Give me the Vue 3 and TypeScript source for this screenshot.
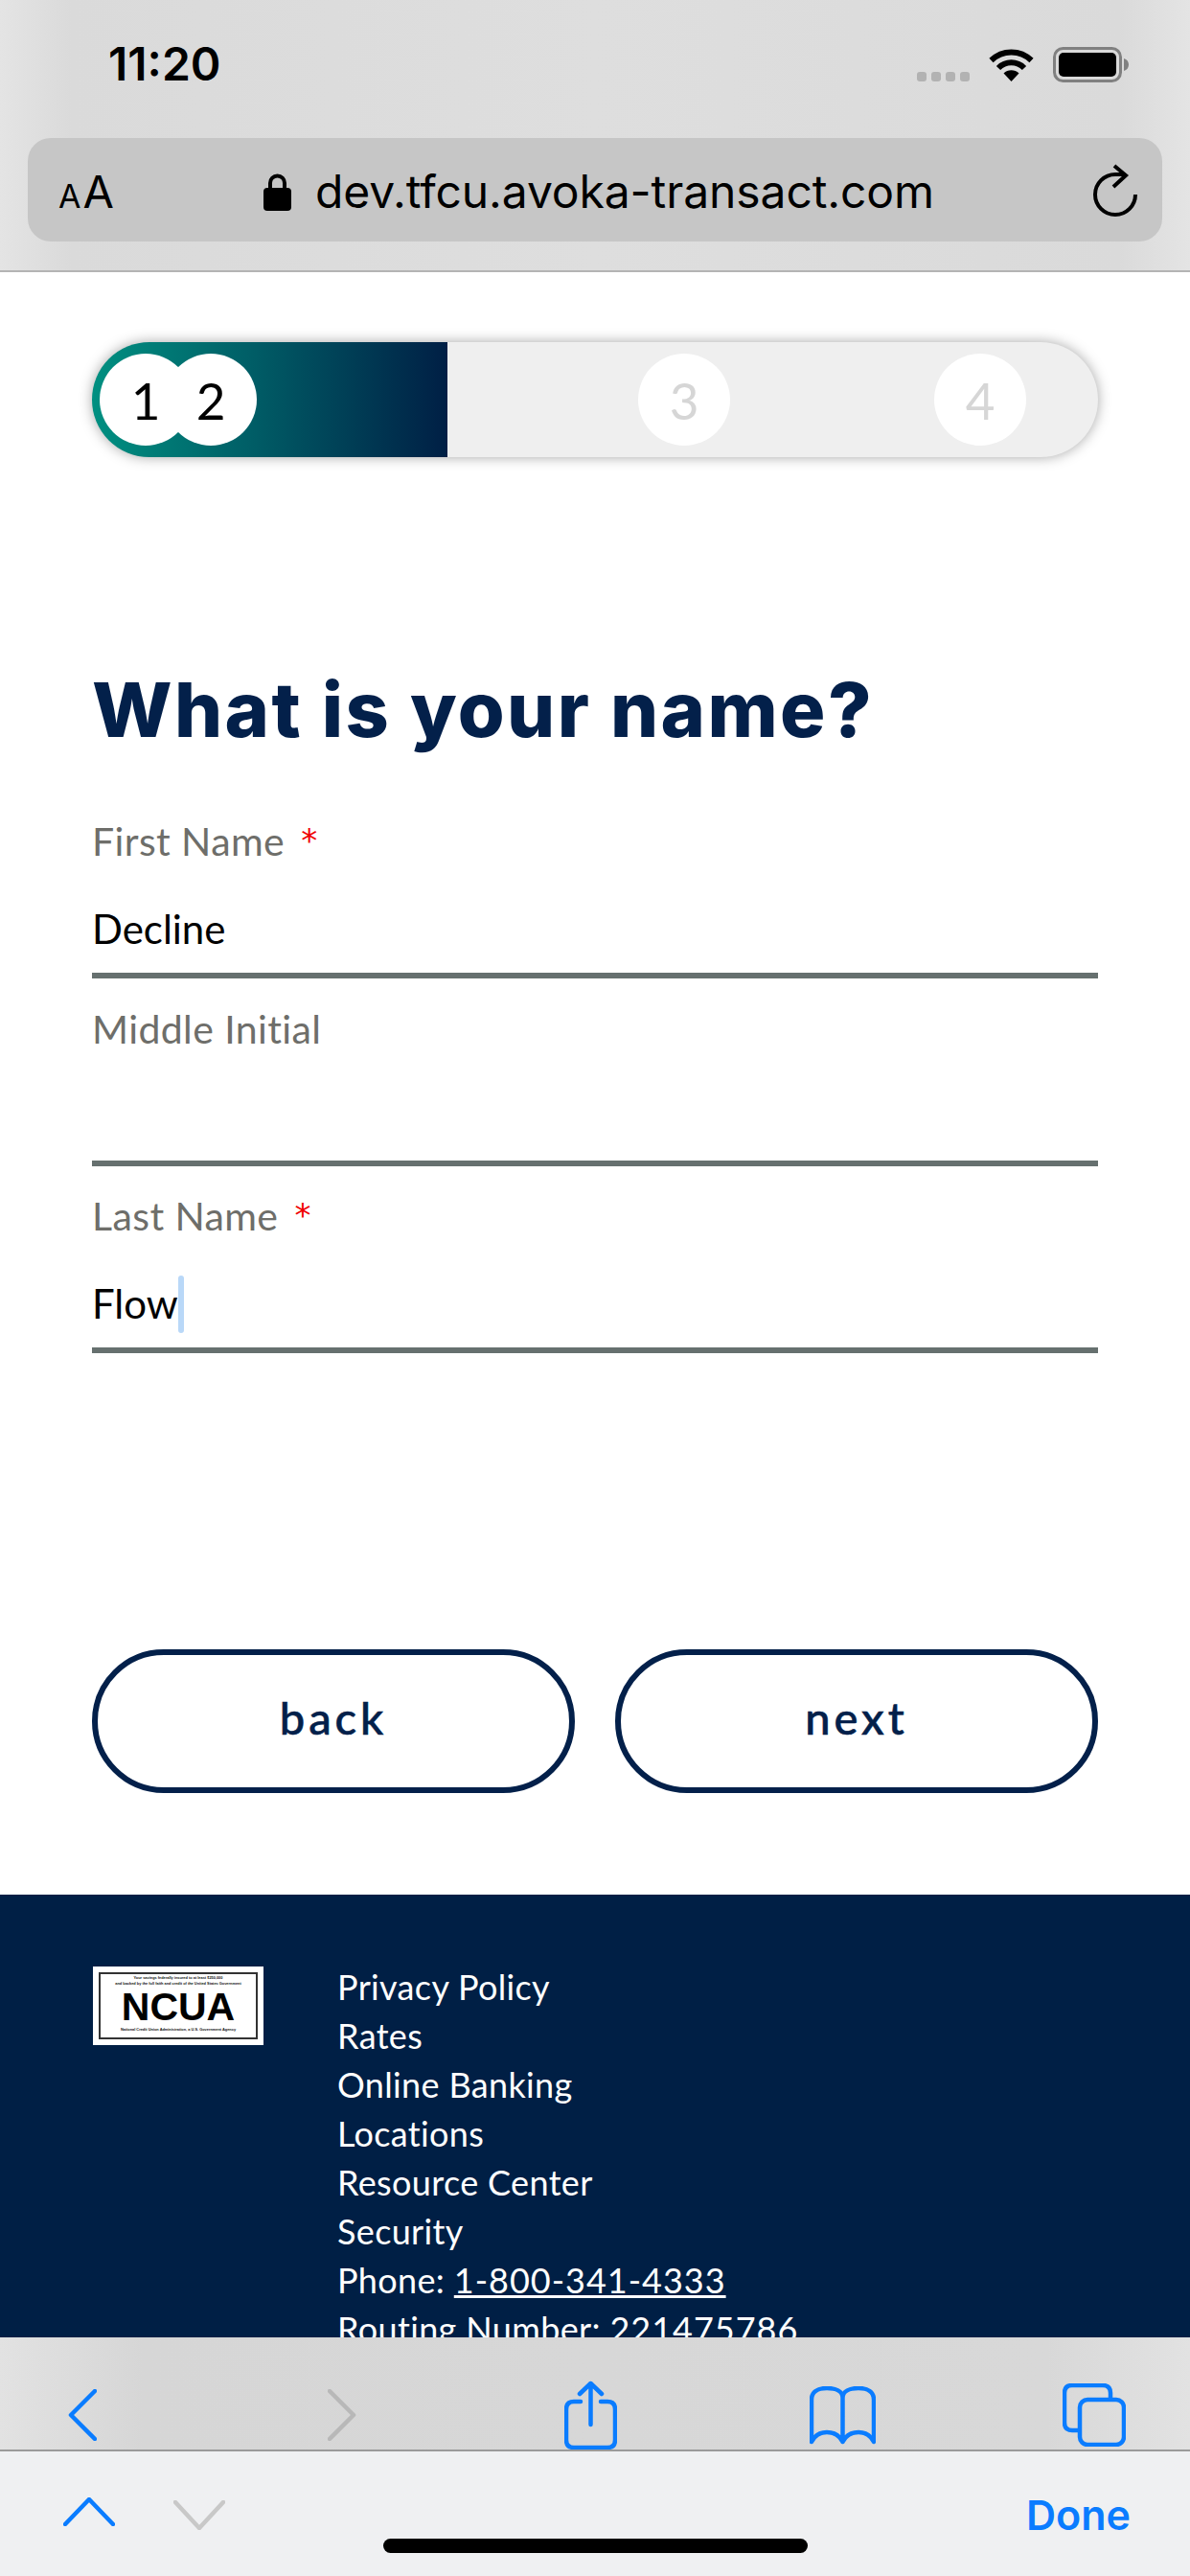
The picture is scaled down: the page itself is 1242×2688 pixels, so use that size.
<script setup lang="ts">
interface Field {
  label: string
  value?: string
  required?: boolean
  focused?: boolean
}

const fields: Field[] = [
  { label: 'First Name', value: 'Decline', required: true },
  { label: 'Middle Initial' },
  { label: 'Last Name', value: 'Flow', required: true, focused: true },
]

const steps = [
  { n: 1, cls: 'active' },
  { n: 2, cls: 'active second' },
  { n: 3, cls: 'todo third' },
  { n: 4, cls: 'todo fourth' },
]

const links = ['Privacy Policy', 'Rates', 'Online Banking', 'Locations', 'Resource Center', 'Security']
</script>

<template>
  <div class="phone">
    <header class="safari-top">
      <div class="status">
        <span class="time">11:20</span>
        <span class="dots"><i></i><i></i><i></i><i></i></span>
        <svg class="wifi" width="47" height="36" viewBox="0 0 47 36">
          <path d="M2.500 14A30 30 0 0 1 44.500 14" fill="none" stroke="#000" stroke-width="6" />
          <path d="M10 22A19 19 0 0 1 37 22" fill="none" stroke="#000" stroke-width="6" />
          <path d="M15.500 27.500A11.500 11.500 0 0 1 31.500 27.500L23.500 36Z" fill="#000" />
        </svg>
        <svg class="battery" width="79" height="37" viewBox="0 0 79 37">
          <rect x="1.500" y="1.500" width="69" height="34" rx="9" fill="none" stroke="#808080" stroke-width="3" />
          <rect x="6" y="6" width="60" height="25" rx="5" fill="#000" />
          <path d="M74 12c3 1 5 3 5 6.500s-2 5.500-5 6.500Z" fill="#808080" />
        </svg>
      </div>
      <div class="address">
        <span class="aa"><small>A</small>A</span>
        <svg class="lock" width="29" height="39" viewBox="0 0 29 39">
          <rect x="0" y="15" width="29" height="24" rx="4" fill="#000" />
          <path d="M7 17V10a7.500 7.500 0 0 1 15 0V17" fill="none" stroke="#000" stroke-width="4" />
        </svg>
        <span class="url">dev.tfcu.avoka-transact.com</span>
        <svg class="reload" width="48" height="56" viewBox="0 0 48 56">
          <path d="M45 32A21 21 0 1 1 24 11H34M23 2L35 12L22 24" fill="none" stroke="#000" stroke-width="4" />
        </svg>
      </div>
    </header>

    <main class="page">
      <section class="content">
        <div class="progress">
          <span v-for="s in steps" :key="s.n" class="step" :class="s.cls">{{ s.n }}</span>
        </div>

        <h1>What is your name?</h1>

        <div v-for="f in fields" :key="f.label" class="field">
          <label>{{ f.label }}<em v-if="f.required">*</em></label>
          <div class="value">{{ f.value }}<span v-if="f.focused" class="caret"></span></div>
        </div>

        <div class="actions">
          <button type="button">back</button>
          <button type="button">next</button>
        </div>
      </section>

      <footer class="footer">
        <div class="ncua">
          <div class="ncua-inner">
            <p>Your savings federally insured to at least $250,000</p>
            <p>and backed by the full faith and credit of the United States Government</p>
            <strong>NCUA</strong>
            <p>National Credit Union Administration, a U.S. Government Agency</p>
          </div>
        </div>
        <ul>
          <li v-for="l in links" :key="l">{{ l }}</li>
          <li>Phone: <u class="num">1-800-341-4333</u></li>
          <li>Routing Number: <span class="num">221475786</span></li>
        </ul>
      </footer>
    </main>

    <nav class="toolbar">
      <svg width="30" height="54" viewBox="0 0 30 54">
        <path d="M28 2L3 27L28 52" class="blue" />
      </svg>
      <svg width="30" height="54" viewBox="0 0 30 54">
        <path d="M2 2L27 27L2 52" class="grey" />
      </svg>
      <svg width="55" height="72" viewBox="0 0 55 72">
        <path d="M17 22H10q-8 0-8 8V62q0 8 8 8H45q8 0 8-8V30q0-8-8-8H38" class="blue" />
        <path d="M27.500 46V3M16 14L27.500 3L39 14" class="blue" />
      </svg>
      <svg width="69" height="61" viewBox="0 0 69 61">
        <path d="M34.500 12C34.500 5 27 2 18 2C8 2 2 6 2 14V58C6 50 12 48 18 48C25 48 31 51 34.500 58C38 51 44 48 51 48C57 48 63 50 67 58V14C67 6 61 2 51 2C42 2 34.500 5 34.500 12V58" class="blue" />
      </svg>
      <svg width="66" height="66" viewBox="0 0 66 66">
        <rect x="18" y="17" width="46" height="47" rx="8" class="blue" />
        <path d="M50 15V10q0-8-8-8H10q-8 0-8 8V41q0 8 8 8h6" class="blue" />
      </svg>
    </nav>

    <div class="findbar">
      <div class="find-row">
        <svg class="up" width="54" height="30" viewBox="0 0 54 30">
          <path d="M2 28L27 2L52 28" class="blue" />
        </svg>
        <svg class="down" width="54" height="31" viewBox="0 0 54 31">
          <path d="M2 2L27 29L52 2" class="lightgrey" />
        </svg>
        <span class="done-btn">Done</span>
      </div>
      <div class="home"></div>
    </div>
  </div>
</template>

<style scoped>
.phone,
.phone * {
  box-sizing: border-box;
}

.phone {
  width: 1242px;
  height: 2688px;
  display: flex;
  flex-direction: column;
  overflow: hidden;
  background: #fff;
  font-family: Lato, 'Noto Sans', sans-serif;
}

.safari-top {
  height: 284px;
  flex: none;
  border-bottom: 2px solid #b4b4b4;
  padding: 49px 29px 0;
  background: linear-gradient(90deg, #e4e4e4 0, #dadada 6%, #dedede 50%, #dadada 94%, #e4e4e4 100%);
}

.status {
  display: flex;
  align-items: flex-start;
  height: 95px;
  font-family: Inter, sans-serif;
}

.time {
  width: 928px;
  padding-left: 84px;
  font-size: 48px;
  line-height: 36px;
  font-weight: 600;
  color: #000;
}

.dots {
  display: flex;
  gap: 5px;
  width: 75px;
  padding-top: 26px;
}

.dots i {
  width: 10px;
  height: 10px;
  border-radius: 3px;
  background: #b2b2b2;
}

.battery {
  margin-left: 20px;
}

.address {
  height: 108px;
  border-radius: 24px;
  background: #c6c6c6;
  display: flex;
  align-items: center;
  font-family: Inter, sans-serif;
  color: #000;
}

.aa {
  width: 246px;
  padding-left: 32px;
  font-size: 47px;
  line-height: 48px;
  padding-top: 8px;
}

.aa small {
  font-size: 34px;
  margin-right: 2px;
}

.lock {
  margin-top: 4px;
}

.url {
  margin-left: 25px;
  width: 811px;
  font-size: 48px;
  letter-spacing: -0.1px;
  white-space: nowrap;
  padding-top: 2px;
}

.reload {
  margin-top: 2px;
}

.page {
  flex: 1;
  min-height: 0;
  overflow: hidden;
}

.content {
  height: 1693px;
  padding: 73px 96px 0;
}

.progress {
  height: 120px;
  border-radius: 60px;
  background: linear-gradient(90deg, #009081 0, #001f45 100%) no-repeat 0 0 / 371px 100%, #efefef;
  box-shadow: 0 0 14px rgba(0, 0, 0, 0.35);
  display: flex;
  align-items: center;
  padding-left: 8px;
}

.step {
  width: 96px;
  height: 96px;
  flex: none;
  border-radius: 50%;
  background: #fff;
  display: flex;
  align-items: center;
  justify-content: center;
  font-size: 53px;
}

.step.active {
  color: #000;
}

.step.todo {
  color: #d6d6d6;
}

.step.second {
  margin-left: -28px;
}

.step.third {
  margin-left: 398px;
}

.step.fourth {
  margin-left: 213px;
}

h1 {
  margin: 214px 0 36.500px;
  height: 98px;
  font-family: Inter, sans-serif;
  font-size: 79px;
  line-height: 98px;
  font-weight: 800;
  letter-spacing: 2.400px;
  white-space: nowrap;
  color: #03204a;
}

.field {
  height: 195.500px;
  border-bottom: 6px solid #66706f;
  display: flex;
  flex-direction: column;
}

.field label {
  height: 50px;
  margin-top: 27.500px;
  font-size: 41px;
  line-height: 50px;
  letter-spacing: 0.400px;
  color: #6e6e6a;
}

.field em {
  margin-left: 17px;
  font-family: 'DejaVu Sans', sans-serif;
  font-size: 34px;
  line-height: 30px;
  font-style: normal;
  vertical-align: 4px;
  color: #f00000;
}

.value {
  margin-top: 40.500px;
  height: 50px;
  font-size: 42px;
  line-height: 50px;
  color: #000;
  white-space: pre;
}

.caret {
  display: inline-block;
  width: 6px;
  height: 60px;
  margin: -45px 0 -15px;
  border-radius: 3px;
  background: #b9d8f8;
}

.actions {
  display: grid;
  grid-template-columns: 504px 504px;
  gap: 42px;
  margin-top: 309px;
}

.actions button {
  height: 150px;
  padding-bottom: 10px;
  border: 6px solid #03204a;
  border-radius: 75px;
  background: #fff;
  font-family: Lato, sans-serif;
  font-size: 47px;
  font-weight: 500;
  letter-spacing: 4px;
  -webkit-text-stroke: 0.6px #03204a;
  color: #03204a;
}

.footer {
  height: 600px;
  background: #001f45;
  display: flex;
  align-items: flex-start;
  padding: 75px 0 0 97px;
  color: #fff;
}

.ncua {
  width: 178px;
  height: 82px;
  flex: none;
  background: #fff;
  padding: 6px;
  font-family: 'Liberation Sans', sans-serif;
  color: #111;
}

.ncua-inner {
  height: 100%;
  border: 2px solid #333;
  padding-top: 1px;
  text-align: center;
  display: flex;
  flex-direction: column;
  align-items: center;
}

.ncua p {
  margin: 0;
  font-size: 3.900px;
  line-height: 6px;
  font-weight: 700;
  white-space: nowrap;
}

.ncua strong {
  height: 34px;
  margin: 4px 0 4px;
  font-size: 41px;
  line-height: 34px;
  color: #000;
}

.footer ul {
  list-style: none;
  margin: -4px 0 0 77px;
  padding: 0;
  font-size: 36px;
  line-height: 51px;
  letter-spacing: 0.350px;
}

.num {
  letter-spacing: 1px;
}

.toolbar {
  height: 119px;
  flex: none;
  border-bottom: 2px solid #9a9a9a;
  padding: 45px 0 0 71px;
  display: grid;
  grid-template-columns: 271px 247px 256px 264px auto;
  align-items: center;
  background: linear-gradient(90deg, #e2e2e2 0, #d6d6d6 12%, #d8d8d8 88%, #e2e2e2 100%);
}

.findbar {
  height: 130px;
  flex: none;
  padding-top: 41px;
  background: #eff0f2;
}

.find-row {
  display: flex;
  align-items: center;
  height: 50px;
  padding: 0 62px 0 66px;
}

.down {
  margin-left: 61px;
}

.up {
  margin-top: -6px;
}

.done-btn {
  margin-left: auto;
  font-family: Inter, sans-serif;
  font-size: 43px;
  font-weight: 600;
  color: #0a7cff;
}

.home {
  width: 443px;
  height: 15px;
  margin: 0 auto;
  border-radius: 8px;
  background: #000;
}

.blue,
.grey,
.lightgrey {
  fill: none;
  stroke-width: 4.500;
  stroke-linecap: round;
  stroke-linejoin: round;
}

.blue {
  stroke: #0a7cff;
}

.grey {
  stroke: #b8b8b8;
}

.lightgrey {
  stroke: #c8c8c8;
}
</style>
